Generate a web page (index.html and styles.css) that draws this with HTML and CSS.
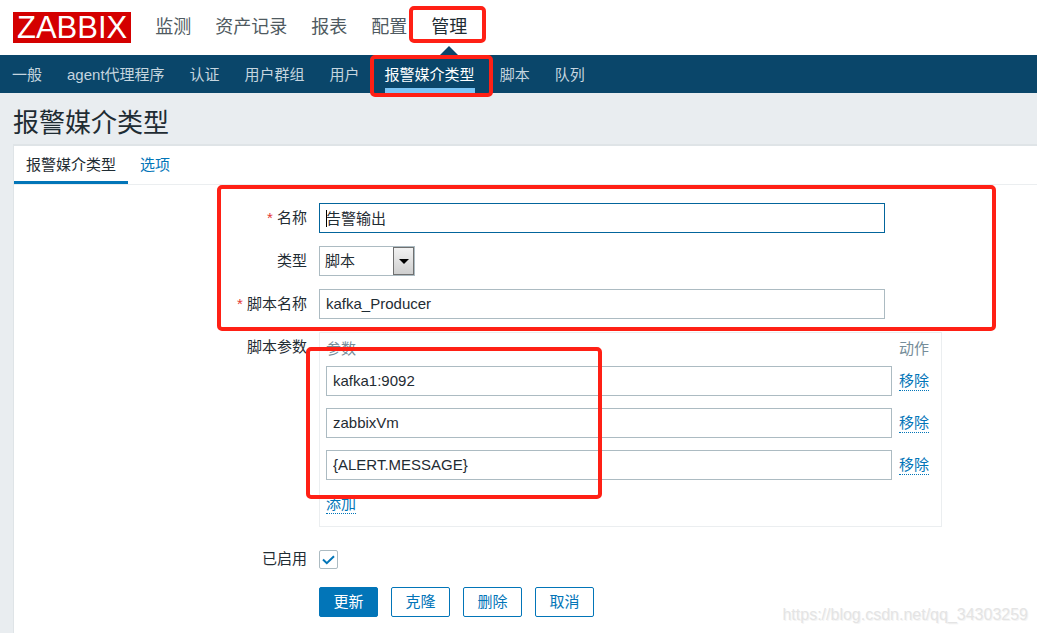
FILE: index.html
```
<!DOCTYPE html>
<html lang="zh-CN">
<head>
<meta charset="utf-8">
<title>报警媒介类型</title>
<meta name="viewport" content="width=device-width, initial-scale=1">
<link rel="stylesheet" href="styles.css">
</head>
<body>
<header class="top-bar">
  <a class="logo" href="#">ZABBIX</a>
  <nav class="main-nav" aria-label="主菜单">
    <a href="#">监测</a>
    <a href="#">资产记录</a>
    <a href="#">报表</a>
    <a href="#">配置</a>
    <a class="selected" href="#">管理<span class="mark mark-menu"></span></a>
  </nav>
</header>
<nav class="sub-nav" aria-label="子菜单">
  <a href="#">一般</a>
  <a href="#">agent代理程序</a>
  <a href="#">认证</a>
  <a href="#">用户群组</a>
  <a href="#">用户</a>
  <a class="selected" href="#">报警媒介类型<span class="mark mark-submenu"></span></a>
  <a href="#">脚本</a>
  <a href="#">队列</a>
</nav>
<main class="page">
  <h1 class="page-title">报警媒介类型</h1>
  <section class="panel">
    <nav class="tabs" aria-label="标签">
      <a class="selected" href="#">报警媒介类型</a>
      <a href="#">选项</a>
    </nav>
    <form class="form">
      <label class="label required" for="name">名称</label>
      <div class="field">
        <input class="text focused" id="name" type="text" value="告警输出">
        <span class="caret"></span>
      </div>

      <label class="label" for="type">类型</label>
      <div class="select-box">
        <select id="type"><option>脚本</option></select>
        <span class="select-arrow"><svg width="10" height="5" viewBox="0 0 10 5"><path d="M0 0h10L5 5z" fill="#000"/></svg></span>
      </div>

      <label class="label required" for="script">脚本名称</label>
      <div class="field">
        <input class="text" id="script" type="text" value="kafka_Producer">
      </div>

      <span class="label" id="params-label">脚本参数</span>
      <div class="params">
        <table aria-labelledby="params-label">
          <thead><tr><th>参数</th><th class="action">动作</th></tr></thead>
          <tbody>
            <tr><td><input class="text" type="text" aria-label="参数 1" value="kafka1:9092"></td><td class="action"><button class="link" type="button">移除</button></td></tr>
            <tr><td><input class="text" type="text" aria-label="参数 2" value="zabbixVm"></td><td class="action"><button class="link" type="button">移除</button></td></tr>
            <tr><td><input class="text" type="text" aria-label="参数 3" value="{ALERT.MESSAGE}"></td><td class="action"><button class="link" type="button">移除</button></td></tr>
          </tbody>
        </table>
        <button class="link" type="button">添加</button>
        <span class="mark mark-params"></span>
      </div>

      <label class="label" for="enabled">已启用</label>
      <div class="check">
        <input id="enabled" type="checkbox" checked>
        <svg width="13" height="10" viewBox="0 0 13 10"><path d="M1 4.5L4.8 8.2L12 1.2" fill="none" stroke="#0275b8" stroke-width="2"/></svg>
      </div>

      <div class="buttons">
        <button class="btn primary" type="submit">更新</button>
        <button class="btn" type="button">克隆</button>
        <button class="btn" type="button">删除</button>
        <button class="btn" type="button">取消</button>
      </div>
      <span class="mark mark-fields"></span>
    </form>
  </section>
</main>
<div class="watermark">https://blog.csdn.net/qq_34303259</div>
</body>
</html>
```
FILE: styles.css
```
* {
  box-sizing: border-box;
}

body {
  margin: 0;
  min-height: 100vh;
  display: flex;
  flex-direction: column;
  position: relative;
  background: #e9edf0;
  color: #1f2c33;
  font: 15px/20px "Liberation Sans", Arial, "Noto Sans CJK SC", sans-serif;
}

a {
  text-decoration: none;
}

input,
select,
button {
  font: inherit;
  color: inherit;
  margin: 0;
}

.top-bar {
  display: flex;
  align-items: center;
  gap: 24px;
  height: 55px;
  padding: 0 13px;
  background: #fff;
}

.logo {
  padding: 0 4px;
  background: #d40000;
  color: #fff;
  font-size: 31px;
  line-height: 31px;
}

.main-nav {
  display: flex;
  gap: 24px;
  height: 100%;
  font-size: 18px;
  line-height: 54px;
  white-space: nowrap;
}

.main-nav a {
  position: relative;
  color: #4f5a61;
}

.main-nav .selected {
  color: #1f2c33;
}

.main-nav .selected::after {
  content: "";
  position: absolute;
  left: 50%;
  bottom: 0;
  margin-left: -9px;
  border: 9px solid transparent;
  border-top: 0;
  border-bottom-color: #0a466a;
}

.sub-nav {
  display: flex;
  gap: 25px;
  height: 38px;
  padding: 0 12px;
  background: #0a466a;
  line-height: 40px;
  white-space: nowrap;
}

.sub-nav a {
  position: relative;
  color: #c5d5df;
}

.sub-nav .selected {
  color: #fff;
  box-shadow: inset 0 -5px #7dc5f5;
}

.page {
  flex: 1;
  display: flex;
  flex-direction: column;
  padding-left: 13px;
}

.page-title {
  margin: 0;
  padding: 10px 0 1px;
  font-size: 26px;
  font-weight: 400;
  line-height: 40px;
}

.panel {
  flex: 1;
  background: #fff;
  border-top: 2px solid #dfe4e7;
  border-left: 1px solid #dfe4e7;
}

.tabs {
  display: flex;
  border-bottom: 1px solid #ebeef0;
  line-height: 38px;
}

.tabs a {
  padding: 0 12px;
  color: #0275b8;
}

.tabs .selected {
  color: #1f2c33;
  box-shadow: inset 0 -3px #0275b8;
}

.form {
  position: relative;
  display: grid;
  grid-template-columns: 293px minmax(0, 623px);
  column-gap: 12px;
  row-gap: 13px;
  padding: 18px 0 16px;
}

.label {
  line-height: 30px;
  text-align: right;
}

.required::before {
  content: "* ";
  color: #e33734;
}

.field {
  position: relative;
  margin-right: 57px;
}

.text {
  display: block;
  width: 100%;
  height: 30px;
  padding: 0 6px 1px;
  border: 1px solid #acbbc2;
  border-radius: 0;
  background: #fff;
  outline: 0;
}

.focused,
.text:focus {
  border-color: #03659c;
}

.caret {
  position: absolute;
  left: 7px;
  top: 7px;
  width: 1px;
  height: 17px;
  background: #000;
}

.select-box {
  position: relative;
  width: 96px;
}

.select-box select {
  display: block;
  width: 100%;
  height: 30px;
  padding: 0 5px;
  border: 1px solid #acbbc2;
  border-radius: 0;
  background: #fff;
  appearance: none;
}

.select-arrow {
  position: absolute;
  top: 1px;
  right: 1px;
  bottom: 1px;
  width: 21px;
  display: grid;
  place-items: center;
  border: 1px solid #707070;
  background: linear-gradient(#f2f2f2, #cfcfcf);
  pointer-events: none;
}

.params {
  position: relative;
  margin-bottom: 4px;
  padding: 0 6px 12px;
  border: 1px solid #ebeef0;
}

.params table {
  width: 100%;
  margin-bottom: 2px;
  border-collapse: collapse;
}

.params th {
  height: 33px;
  padding: 0 0 2px;
  color: #768d99;
  font-weight: 400;
  text-align: left;
}

.params td {
  padding: 0 0 12px;
}

.params .action {
  width: 43px;
  padding-left: 7px;
}

.link {
  display: block;
  padding: 0;
  border: 0;
  border-bottom: 1px dotted #0275b8;
  background: none;
  color: #0275b8;
  line-height: 19px;
}

.check {
  display: grid;
  width: 19px;
  margin: 6px 0 5px;
}

.check input,
.check svg {
  grid-area: 1 / 1;
  place-self: center;
}

.check input {
  width: 19px;
  height: 19px;
  border: 1px solid #acbbc2;
  border-radius: 2px;
  background: #fff;
  appearance: none;
}

.check svg {
  z-index: 1;
  pointer-events: none;
}

.check input:not(:checked) + svg {
  display: none;
}

.buttons {
  grid-column: 2;
  display: flex;
  gap: 13px;
}

.btn {
  width: 59px;
  height: 30px;
  padding: 0;
  border: 1px solid #0275b8;
  border-radius: 2px;
  background: #fff;
  color: #0275b8;
}

.primary {
  background: #0275b8;
  color: #fff;
}

/* Red highlight frames laid over the page */
.mark {
  position: absolute;
  z-index: 2;
  border: 4px solid #ff2015;
  border-radius: 5px;
  pointer-events: none;
}

.mark-menu {
  inset: 6px -19px 12px -22px;
}

.mark-submenu {
  inset: 0 -18px -4px -15px;
}

.mark-fields {
  top: 0;
  left: 203px;
  width: 779px;
  height: 146px;
}

.mark-params {
  top: 14px;
  left: -14px;
  width: 296px;
  height: 152px;
}

.watermark {
  position: absolute;
  right: 9px;
  bottom: 8px;
  color: #e4e4e4;
  font-size: 16px;
  text-shadow: 1px 1px #f4f4f4;
}
```
